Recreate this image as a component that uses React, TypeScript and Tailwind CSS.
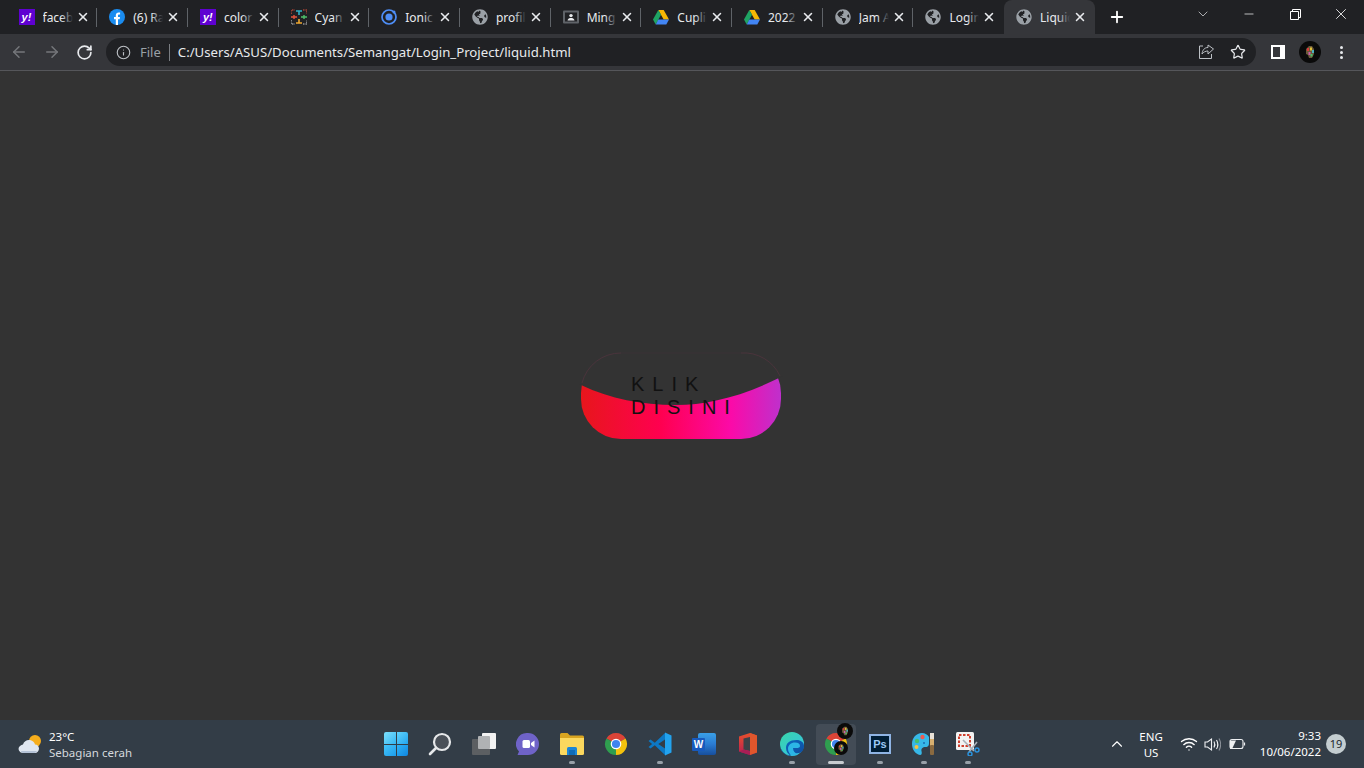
import React from "react";
import { ArrowLeft, ArrowRight, RotateCw, Info, Star, X, Plus, ChevronDown, Minus, ChevronUp, Wifi } from "lucide-react";
import { FaGlobeAmericas } from "react-icons/fa";

const Yahoo = () => (
  <div className="w-4 h-4 bg-[#5f01d1] flex items-center justify-center text-white text-[11px] font-bold italic leading-none" style={{ fontFamily: "Liberation Sans" }}>
    y!
  </div>
);

const Facebook = () => (
  <svg width="16" height="16" viewBox="0 0 16 16">
    <circle cx="8" cy="8" r="8" fill="#1a8cf0" />
    <path d="M6.8 16V10.2H5V8h1.8V6.3C6.8 4.4 7.9 3.4 9.6 3.4c.8 0 1.5.1 1.5.1v1.9h-.9c-.9 0-1.2.6-1.2 1.1V8h2l-.3 2.2H9V16z" fill="#fff" />
  </svg>
);

const Cyan = () => (
  <svg width="16" height="16" viewBox="0 0 16 16" fill="none" strokeWidth="1.2">
    <path d="M0 5V1h4M12 1h4v4" stroke="#e2543c" strokeDasharray="1.5 1" />
    <path d="M0 11v4h4M12 15h4v-4" stroke="#c8c8c8" strokeDasharray="1.5 1" />
    <path d="M5 2h6M8 2v4" stroke="#2fb4c8" strokeWidth="1.6" />
    <path d="M0 8h6M3 6v4" stroke="#e2543c" strokeWidth="1.4" />
    <path d="M10 8h6M13 6v4" stroke="#4ec06a" strokeWidth="1.4" />
    <path d="M5 14h6M8 10v4" stroke="#f0a830" strokeWidth="1.6" />
  </svg>
);

const Ionic = () => (
  <svg width="16" height="16" viewBox="0 0 16 16" fill="none">
    <circle cx="8" cy="8" r="7" stroke="#4e8ef7" strokeWidth="1.7" />
    <circle cx="8" cy="8" r="3.6" fill="#4e8ef7" />
    <circle cx="13" cy="3" r="1.5" fill="#4e8ef7" />
  </svg>
);

const Globe = () => (
  <div className="w-4 h-4 rounded-full bg-[#202124] flex items-center justify-center">
    <FaGlobeAmericas size={16} color="#9aa0a6" />
  </div>
);

const Portrait = () => (
  <svg width="16" height="16" viewBox="0 0 16 16">
    <rect y="1.5" width="16" height="13" rx="1" fill="#5f6368" />
    <rect x="2" y="3.5" width="12" height="9" fill="#202124" />
    <circle cx="8" cy="6.6" r="1.7" fill="#e8eaed" />
    <path d="M4.5 11.5c.4-2 2-2.5 3.5-2.5s3.1.5 3.5 2.5z" fill="#e8eaed" />
  </svg>
);

const Drive = () => (
  <svg width="16" height="15" viewBox="0 0 16 15">
    <path d="M5.3 0h5.4l5.3 9.6h-5.3z" fill="#f6b704" />
    <path d="M5.3 0 0 9.6 2.7 14.4 8 4.8z" fill="#1fa463" />
    <path d="M5.3 9.6H16l-2.7 4.8H2.7z" fill="#4285f4" />
  </svg>
);

const tabs: { icon: React.ReactNode; title: string }[] = [
  { icon: <Yahoo />, title: "facebook" },
  { icon: <Facebook />, title: "(6) Ramai" },
  { icon: <Yahoo />, title: "color" },
  { icon: <Cyan />, title: "Cyan" },
  { icon: <Ionic />, title: "Ionic" },
  { icon: <Globe />, title: "profile" },
  { icon: <Portrait />, title: "Ming" },
  { icon: <Drive />, title: "Cuplikan" },
  { icon: <Drive />, title: "2022" },
  { icon: <Globe />, title: "Jam Anal" },
  { icon: <Globe />, title: "Login" },
];

const Tab = ({ icon, title, active, last }: { icon: React.ReactNode; title: string; active?: boolean; last?: boolean }) => (
  <div className={`relative w-[90.7px] h-[34px] shrink-0 flex items-center pl-[12px] ${active ? "bg-[#35363a] rounded-t-lg" : ""}`}>
    <div className="w-4 h-4 shrink-0 flex items-center justify-center">{icon}</div>
    <div className="relative ml-[8px] w-[30px] overflow-hidden whitespace-nowrap pt-[1px] text-[12px] text-[#e8eaed]">
      {title}
      <div className={`absolute right-0 top-0 bottom-0 w-[12px] bg-gradient-to-r from-transparent ${active ? "to-[#35363a]" : "to-[#202124]"}`} />
    </div>
    <X size={14} strokeWidth={2.6} className="ml-[3px] text-[#e8eaed] shrink-0" />
    {!active && !last && <div className="absolute right-0 top-[8px] h-[19px] w-px bg-[#5f6368]" />}
  </div>
);

const ShareIcon = () => (
  <svg width="16" height="16" viewBox="0 0 16 16" fill="none" stroke="#bdc1c6" strokeWidth="1">
    <path d="M5 2H1.5v12.5h12V10" />
    <path d="M15.5 5 10 1v2.5C6.5 3.5 4.5 6 4 10c1.500-2 3.500-3 6-3v3z" />
  </svg>
);

const PanelIcon = () => (
  <div className="w-[14px] h-[14px] bg-white p-[2px] pr-[5px]">
    <div className="w-full h-full bg-[#35363a]" />
  </div>
);

const Avatar = ({ size }: { size: number }) => (
  <svg width={size} height={size} viewBox="0 0 22 22">
    <circle cx="11" cy="11" r="11" fill="#0a0a0a" />
    <path d="M7 8l3-3h3l2 3v5l-2 4h-3l-1-3-2-1z" fill="#6b5a3a" />
    <rect x="8" y="7" width="2" height="3" fill="#d93a3a" />
    <rect x="11" y="6.500" width="2" height="3" fill="#e0c23a" />
    <rect x="13" y="9" width="2" height="3" fill="#4ab0c0" />
    <rect x="9.500" y="11" width="2" height="3" fill="#c85ab0" />
    <rect x="11.500" y="13" width="2" height="2.500" fill="#4ac06a" />
  </svg>
);

const Chrome = ({ size = 24 }: { size?: number }) => (
  <svg width={size} height={size} viewBox="0 0 24 24">
    <path d="M12 12 2.470 6.500A11 11 0 0 1 21.530 6.500Z" fill="#db4437" />
    <path d="M12 12 21.530 6.500A11 11 0 0 1 12 23Z" fill="#f4c20d" />
    <path d="M12 12 12 23A11 11 0 0 1 2.470 6.500Z" fill="#2f9e4f" />
    <circle cx="12" cy="12" r="5.300" fill="#fff" />
    <circle cx="12" cy="12" r="4.100" fill="#3f84ef" />
  </svg>
);

const WinLogo = () => (
  <div className="grid grid-cols-2 gap-[1px] w-[24px] h-[24px]">
    <div className="rounded-tl-[2px] bg-gradient-to-br from-[#7ce0fb] to-[#2fb5f2]" />
    <div className="rounded-tr-[2px] bg-gradient-to-br from-[#5ed2fa] to-[#1ea4ee]" />
    <div className="rounded-bl-[2px] bg-gradient-to-br from-[#45c4f8] to-[#1a9dec]" />
    <div className="rounded-br-[2px] bg-gradient-to-br from-[#2fb2f4] to-[#0f86e0]" />
  </div>
);

const SearchIcon = () => (
  <svg width="24" height="24" viewBox="0 0 24 24" fill="none">
    <circle cx="14" cy="10" r="8" fill="#4a5058" stroke="#e6e8ea" strokeWidth="2.200" />
    <path d="M8 16 2 22" stroke="#e6e8ea" strokeWidth="2.600" strokeLinecap="round" />
  </svg>
);

const TaskView = () => (
  <svg width="24" height="22" viewBox="0 0 24 22">
    <rect y="6" width="18" height="16" rx="1" fill="#5c5f62" />
    <rect x="10" y="0" width="14" height="16" rx="1" fill="#f2f2f2" />
    <rect x="6" y="3" width="12" height="13" rx="1" fill="#b0b2b4" />
  </svg>
);

const Meet = () => (
  <svg width="24" height="24" viewBox="0 0 24 24">
    <path d="M12 1a11 11 0 0 1 0 22H1.500L3 19.500A11 11 0 0 1 12 1z" fill="#6f63c8" />
    <rect x="6.500" y="8" width="7.500" height="8" rx="1.500" fill="#fff" />
    <path d="M15 11l3.500-2.500v7L15 13z" fill="#fff" />
  </svg>
);

const Explorer = () => (
  <svg width="24" height="22" viewBox="0 0 24 22">
    <path d="M0 1.500A1.500 1.500 0 0 1 1.500 0h6l2.500 2.500h12.500A1.500 1.500 0 0 1 24 4v3H0z" fill="#d9a520" />
    <path d="M0 5h24v15.500a1.500 1.500 0 0 1-1.500 1.500h-21A1.500 1.500 0 0 1 0 20.500z" fill="#fbd85e" />
    <path d="M7 15.500a1.500 1.500 0 0 1 1.500-1.500h7a1.500 1.500 0 0 1 1.500 1.500V22H7z" fill="#1c86d6" />
    <rect x="9" y="17" width="6" height="5" fill="#0f6cb8" />
  </svg>
);

const VsCode = () => (
  <svg width="24" height="24" viewBox="0 0 24 24">
    <path d="M.5 9 2.500 7.400l4.300 3.300L17 1v6.500L10.300 12 17 16.500V23L6.800 13.300 2.500 16.600.5 15l3.600-3z" fill="#0d78c4" />
    <path d="M17 .5 23.500 3.600v16.800L17 23.500z" fill="#22a3ef" />
  </svg>
);

const Word = () => (
  <div className="relative w-[24px] h-[24px]">
    <div className="absolute right-0 top-[1px] w-[18px] h-[22px] rounded-[2px] bg-gradient-to-b from-[#3aa0e8] via-[#2b7cd3] to-[#174f9e]" />
    <div className="absolute left-0 top-[6px] w-[13px] h-[13px] rounded-[1px] bg-[#185abd] flex items-center justify-center text-white text-[10px] font-bold" style={{ fontFamily: "Liberation Sans" }}>
      W
    </div>
  </div>
);

const Office = () => (
  <svg width="18" height="22" viewBox="0 0 18 22">
    <defs>
      <linearGradient id="officeA" x1="0" y1="0" x2="0" y2="1">
        <stop offset="0" stopColor="#e8502c" />
        <stop offset="1" stopColor="#b81e52" />
      </linearGradient>
    </defs>
    <path d="M11 0 18 2.500v17L11 22 0 18.500v-15z" fill="url(#officeA)" />
    <path d="M4.500 5.500 11 4V18L4.500 16.500z" fill="#3d4248" />
    <path d="M11 0 18 2.500v17L11 22z" fill="#e0562c" />
    <path d="M0 18.500 4.500 16.500 11 18V22z" fill="#a81e56" />
  </svg>
);

const Edge = () => (
  <svg width="24" height="24" viewBox="0 0 24 24">
    <defs>
      <linearGradient id="edgeA" x1="0" y1="0" x2="1" y2="1">
        <stop offset="0" stopColor="#38d6a8" />
        <stop offset="1" stopColor="#36c0e8" />
      </linearGradient>
      <linearGradient id="edgeB" x1="0" y1="0" x2="1" y2="1">
        <stop offset="0" stopColor="#0c6cc4" />
        <stop offset="1" stopColor="#0f4a9c" />
      </linearGradient>
    </defs>
    <circle cx="12" cy="12" r="12" fill="url(#edgeA)" />
    <path d="M24 14c0-3.500-3-6-7.500-6C9.500 8 6 11 6 16c0 3.500 2 6.500 5.500 8C6 24 0 19 0 12c0 8 5 11 9 11 5 0 8-2 10-2 2.500 0 5-3 5-7z" fill="url(#edgeB)" />
    <path d="M8 17c0-4 3-6.500 7-6.500 3.500 0 5 1.500 5 3.500 0 1.500-1.500 2-3.500 2H13c0 3 2 5.500 5 6a12 12 0 0 1-7 1.500C10 22 8 20 8 17z" fill="#2cb6e6" />
  </svg>
);

const ActiveChrome = () => (
  <div className="relative w-[24px] h-[24px]">
    <Chrome />
    <div className="absolute left-[13px] top-[-9px] rounded-full">
      <Avatar size={16} />
    </div>
    <div className="absolute left-[10px] top-[9px] rounded-full">
      <Avatar size={14} />
    </div>
  </div>
);

const Photoshop = () => (
  <div className="w-[22px] h-[20px] bg-[#001e36] border-2 border-[#8fb4e4] flex items-center justify-center text-[#9cc8f5] text-[11px] font-bold leading-none" style={{ fontFamily: "Liberation Sans" }}>
    Ps
  </div>
);

const Paint = () => (
  <svg width="24" height="24" viewBox="0 0 24 24">
    <path d="M10 1C4 1 0 6 0 12c0 5 3 10 8 11 2 0 2-2 1.500-4s1-4 4-4 3.500-2 3.500-4V5C16 3 13 1 10 1z" fill="#37b8e8" />
    <circle cx="5" cy="9" r="2.200" fill="#45c06e" />
    <circle cx="10.500" cy="5" r="2.200" fill="#f05a50" />
    <circle cx="4.500" cy="15" r="2" fill="#f7c340" />
    <circle cx="12" cy="11" r="1" fill="#1a6db0" />
    <rect x="18" y="6" width="4" height="9" fill="#d8b070" />
    <rect x="18" y="13" width="4" height="10" rx="1" fill="#8a6a40" />
    <rect x="18" y="1" width="4" height="6" fill="#e8e2d8" />
  </svg>
);

const Snip = () => (
  <svg width="24" height="24" viewBox="0 0 24 24" fill="none">
    <rect x="0" y="0" width="18" height="18" rx="1.500" fill="#f3f3f3" />
    <rect x="3" y="3" width="11" height="11" stroke="#d0402e" strokeWidth="2" strokeDasharray="2.500 1.500" />
    <path d="M7 8 18 19M21 10 13 20" stroke="#a8b0b8" strokeWidth="1.600" />
    <circle cx="21" cy="18" r="2" stroke="#2a94e0" strokeWidth="1.400" />
    <circle cx="14" cy="22" r="2" stroke="#2a94e0" strokeWidth="1.400" />
  </svg>
);

const Weather = () => (
  <svg width="24" height="20" viewBox="0 0 24 20">
    <circle cx="17" cy="7" r="6" fill="#f5ad1c" />
    <path d="M5 19a4 4 0 0 1-3-7c1-1 2-1.500 3-1.500C6 7 9 5.500 12 6c3 .5 4.500 2.500 5 4.500 2.500 0 4 2 4 4.200S19 19 17 19z" fill="#dfe6f0" />
    <path d="M3 17h16c-1 1.500-2 2-3 2H5c-1 0-1.500-.5-2-2z" fill="#b4c2d6" />
  </svg>
);

const Speaker = () => (
  <svg width="17" height="15" viewBox="0 0 17 15" fill="none" stroke="#eef0f2" strokeWidth="1.100">
    <path d="M1 5v5h2.500L7.500 13V2L3.500 5z" />
    <path d="M10 4.500c1 1.800 1 4.200 0 6M12.500 3c1.600 2.700 1.600 6.300 0 9" />
    <path d="M15 1.500c2 3.600 2 8.400 0 12" stroke="#8a9098" />
  </svg>
);

const Battery = () => (
  <svg width="17" height="12" viewBox="0 0 17 12" fill="none">
    <rect x="1" y="1.500" width="13" height="9" rx="2" stroke="#eef0f2" strokeWidth="1.100" />
    <path d="M15.500 4.500v3" stroke="#eef0f2" strokeWidth="1.200" />
    <path d="M1 2.500h6L3 11H1z" fill="#eef0f2" />
  </svg>
);

const taskbarApps: { icon: React.ReactNode; dot?: "small" | "wide"; active?: boolean }[] = [
  { icon: <WinLogo /> },
  { icon: <SearchIcon /> },
  { icon: <TaskView /> },
  { icon: <Meet /> },
  { icon: <Explorer />, dot: "small" },
  { icon: <Chrome /> },
  { icon: <VsCode />, dot: "small" },
  { icon: <Word /> },
  { icon: <Office /> },
  { icon: <Edge />, dot: "small" },
  { icon: <ActiveChrome />, dot: "wide", active: true },
  { icon: <Photoshop />, dot: "small" },
  { icon: <Paint />, dot: "small" },
  { icon: <Snip />, dot: "small" },
];

export default function App() {
  return (
    <div className="w-[1364px] h-[768px] flex flex-col overflow-hidden bg-[#333333]" style={{ fontFamily: '"Noto Sans", sans-serif' }}>
      {/* Tab strip */}
      <div className="h-[34px] bg-[#202124] flex pl-[6.5px] shrink-0">
        {tabs.map((tab, i) => (
          <Tab key={i} icon={tab.icon} title={tab.title} last={i === tabs.length - 1} />
        ))}
        <Tab icon={<Globe />} title="Liquid" active />
        <Plus size={18} strokeWidth={2.4} className="ml-[13px] mt-[8px] text-white" />
        <ChevronDown size={16} strokeWidth={1.2} className="ml-[69px] mt-[6px] text-[#d0d2d4]" />
        <Minus size={14} strokeWidth={1.2} className="ml-[31px] mt-[7px] text-white" />
        <svg width="11" height="11" viewBox="0 0 11 11" fill="none" stroke="#fff" className="ml-[34px] mt-[9px]">
          <path d="M.5 2.500h8v8h-8zM2.500 2.500v-2h8v8h-2" />
        </svg>
        <X size={18} strokeWidth={1.1} className="ml-[31px] mt-[5px] text-white" />
      </div>

      {/* Toolbar */}
      <div className="h-[37px] bg-[#35363a] border-b border-[#55565a] flex items-center shrink-0">
        <ArrowLeft size={18} strokeWidth={2} className="ml-[10px] text-[#75777b]" />
        <ArrowRight size={18} strokeWidth={2} className="ml-[15px] text-[#75777b]" />
        <RotateCw size={17} strokeWidth={2.4} className="ml-[15px] text-[#e8eaed]" />
        <div className="ml-[13px] w-[1150px] h-[28px] rounded-full bg-[#202124] flex items-center pl-[10px]">
          <Info size={15} strokeWidth={1.8} className="text-[#bdc1c6]" />
          <span className="ml-[9px] mt-[1px] text-[13px] text-[#9aa0a6]">File</span>
          <div className="ml-[8px] w-px h-[17px] bg-[#7a7d82]" />
          <span className="ml-[8px] mt-[1px] text-[13.2px] text-[#e8eaed]">C:/Users/ASUS/Documents/Semangat/Login_Project/liquid.html</span>
          <div className="ml-auto mr-[10px] flex items-center gap-[16px]">
            <ShareIcon />
            <Star size={16} strokeWidth={1.8} className="text-[#e8eaed]" />
          </div>
        </div>
        <div className="ml-[15px]"><PanelIcon /></div>
        <div className="ml-[14px]"><Avatar size={22} /></div>
        <div className="ml-[19px] flex flex-col gap-[2px]">
          <div className="w-[3px] h-[3px] rounded-full bg-[#e8eaed]" />
          <div className="w-[3px] h-[3px] rounded-full bg-[#e8eaed]" />
          <div className="w-[3px] h-[3px] rounded-full bg-[#e8eaed]" />
        </div>
      </div>

      {/* Page */}
      <div className="flex-1 flex items-center justify-center pr-[2px]">
        <div className="relative w-[200px] rounded-[40px] px-[50px] py-[20px] bg-[linear-gradient(90deg,#e8161c_0%,#ff0050_40%,#fb0aa8_75%,#bf30cc_100%)]" style={{ fontFamily: '"Liberation Sans", sans-serif' }}>
          <svg className="absolute inset-0 overflow-visible" width="200" height="86" viewBox="0 0 200 86" fill="none">
            <path d="M-2 -2H202V23L200 24C160 44 125 52 95 52C60 52 30 46 0 32L-2 31Z" fill="#333333" />
            <path d="M1 30A40 40 0 0 1 40 0M160 0A40 40 0 0 1 199 23" stroke="#4a343c" strokeWidth="1" />
            <path d="M40 0H160" stroke="#3a3336" strokeWidth="1" />
          </svg>
          <div className="relative text-[20px] leading-[23px] tracking-[8px] text-[#111111] whitespace-normal">KLIK DISINI</div>
        </div>
      </div>

      {/* Taskbar */}
      <div className="h-[48px] bg-[#333d47] flex shrink-0 text-white">
        <div className="w-[374px] shrink-0 flex items-center pl-[18px]">
          <Weather />
          <div className="ml-[7px] pt-[1px] flex flex-col text-[11.5px] leading-[16px]">
            <span>23°C</span>
            <span className="text-[#d5d9dd]">Sebagian cerah</span>
          </div>
        </div>
        <div className="flex items-center">
          {taskbarApps.map((app, i) => (
            <div key={i} className="relative w-[44px] h-[48px] flex items-center justify-center">
              {app.active && <div className="absolute left-[2px] right-[2px] top-[4px] bottom-[3px] rounded-[4px] bg-[#434c56]" />}
              <div className="relative">{app.icon}</div>
              {app.dot === "small" && <div className="absolute left-[19px] bottom-[4px] w-[6px] h-[3px] rounded-full bg-[#98a0a8]" />}
              {app.dot === "wide" && <div className="absolute left-[14px] bottom-[4px] w-[16px] h-[3px] rounded-full bg-[#c8ccd0]" />}
            </div>
          ))}
        </div>
        <div className="ml-auto flex items-center pr-[18px] text-[11.5px]">
          <ChevronUp size={18} strokeWidth={1.5} />
          <div className="ml-[13px] pt-[1px] flex flex-col items-center leading-[16px]">
            <span>ENG</span>
            <span>US</span>
          </div>
          <Wifi size={18} strokeWidth={1.8} className="ml-[17px]" />
          <div className="ml-[6px]"><Speaker /></div>
          <div className="ml-[8px]"><Battery /></div>
          <div className="ml-[14px] flex flex-col items-end leading-[16px]">
            <span>9:33</span>
            <span>10/06/2022</span>
          </div>
          <div className="ml-[5px] w-[20px] h-[20px] rounded-full bg-[#c4cdd0] text-[#20262c] text-[11px] flex items-center justify-center">19</div>
        </div>
      </div>
    </div>
  );
}
